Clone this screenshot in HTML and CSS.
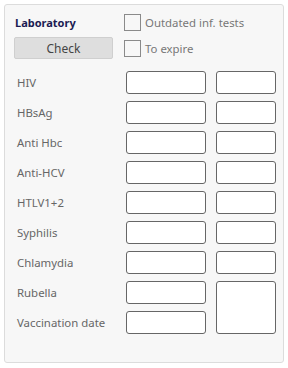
FILE: index.html
```html
<!DOCTYPE html>
<html lang="en">
<head>
	<meta charset="utf-8">
	<title>Laboratory</title>
	<link rel="stylesheet" href="styles.css">
</head>
<body>
<div id="panel">
	<div class="head">
		<b class="title">Laboratory</b>
		<label class="check"><span class="box"></span>Outdated inf. tests</label>
		<button type="button" class="btn">Check</button>
		<label class="check"><span class="box"></span>To expire</label>
	</div>

	<div class="tests">
		<span class="lbl">HIV</span><span class="fld"></span><span class="fld"></span>
		<span class="lbl">HBsAg</span><span class="fld"></span><span class="fld"></span>
		<span class="lbl">Anti Hbc</span><span class="fld"></span><span class="fld"></span>
		<span class="lbl">Anti-HCV</span><span class="fld"></span><span class="fld"></span>
		<span class="lbl">HTLV1+2</span><span class="fld"></span><span class="fld"></span>
		<span class="lbl">Syphilis</span><span class="fld"></span><span class="fld"></span>
		<span class="lbl">Chlamydia</span><span class="fld"></span><span class="fld"></span>
		<span class="lbl">Rubella</span><span class="fld"></span><span class="fld tall"></span>
		<span class="lbl">Vaccination date</span><span class="fld"></span>
	</div>
</div>
</body>
</html>
```

FILE: styles.css
```css
html {
	font-family: "Noto Sans", "Open Sans", sans-serif;
	font-size: 11.4px;
	color: #666;
	background-color: white;
}
body { margin: 4px; }
#panel {
	box-sizing: border-box;
	width: 280px;
	height: 359px;
	padding: 9px 9px;
	border: solid 1px #dcdcdc;
	border-radius: 3px;
	background-color: #f7f7f7;
}
.head {
	display: grid;
	grid-template-columns: 99px 1fr;
	grid-template-rows: 17px 22px;
	column-gap: 11px;
	row-gap: 6px;
	align-items: center;
}
.title {
	padding-left: 1px;
	color: #1b1b52;
	font-size: 11px;
	font-weight: bold;
}
.check {
	display: flex;
	align-items: center;
	gap: 4px;
	color: #777;
}
.box {
	box-sizing: border-box;
	width: 17px;
	height: 17px;
	border: solid 1px #8a8a8a;
}
.btn {
	box-sizing: border-box;
	width: 99px;
	height: 22px;
	padding: 0;
	border: solid 1px #cfcfcf;
	border-radius: 2px;
	background-color: #dedede;
	color: #444;
	font: inherit;
	font-size: 12px;
}
.tests {
	display: grid;
	grid-template-columns: 102px 80px 60px;
	grid-auto-rows: 23px;
	column-gap: 10px;
	row-gap: 7px;
	margin-top: 12px;
	align-items: center;
}
.lbl { padding-left: 3px; white-space: nowrap; }
.fld {
	box-sizing: border-box;
	height: 23px;
	border: solid 1px #666;
	border-radius: 3px;
	background-color: white;
}
.tall {
	grid-row: span 2;
	height: 53px;
	align-self: start;
}
```
